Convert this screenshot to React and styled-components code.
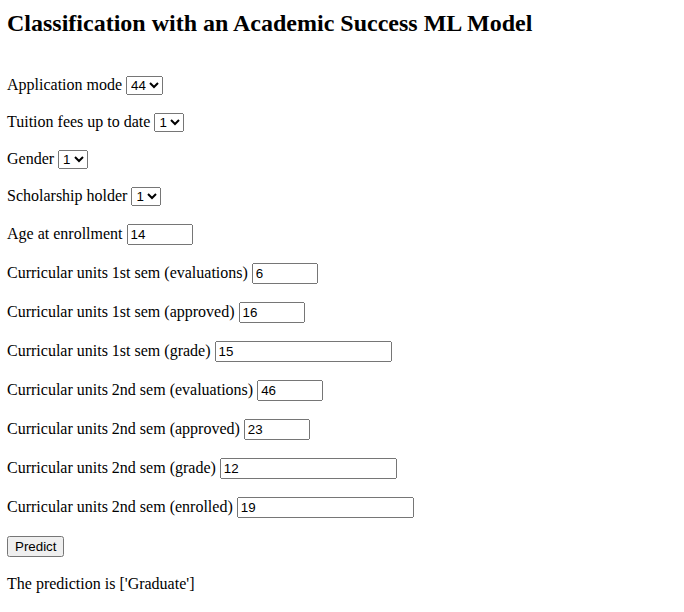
import React from "react";
import styled, { createGlobalStyle } from "styled-components";

const Global = createGlobalStyle`
  html, body { margin: 0; padding: 0; background: #ffffff; }
  body {
    font-family: "Liberation Serif", "Times New Roman", serif;
    font-size: 16px;
    color: #000000;
  }
`;

const Page = styled.div`
  padding: 10px 7px 8px;
  display: flex;
  flex-direction: column;
`;

const Title = styled.h2`
  margin: 0 0 39px;
  font-size: 24px;
  font-weight: bold;
  line-height: normal;
`;

const Form = styled.form`
  display: flex;
  flex-direction: column;
  gap: 18px;
`;

const Row = styled.div`
  display: block;
  line-height: normal;
`;

const Select = styled.select`
  font-family: "Liberation Sans", Arial, sans-serif;
  font-size: 13.333px;
`;

const Input = styled.input`
  font-family: "Liberation Sans", Arial, sans-serif;
  font-size: 13.333px;
  width: ${(p) => (p.$wide ? "169px" : "58px")};
`;

const Button = styled.button`
  font-family: "Liberation Sans", Arial, sans-serif;
  font-size: 13.333px;
`;

const Result = styled.p`
  margin: 18px 0 0;
`;

const selects = [
  ["Application mode", "44"],
  ["Tuition fees up to date", "1"],
  ["Gender", "1"],
  ["Scholarship holder", "1"],
];

const inputs = [
  ["Age at enrollment", "14", false],
  ["Curricular units 1st sem (evaluations)", "6", false],
  ["Curricular units 1st sem (approved)", "16", false],
  ["Curricular units 1st sem (grade)", "15", true],
  ["Curricular units 2nd sem (evaluations)", "46", false],
  ["Curricular units 2nd sem (approved)", "23", false],
  ["Curricular units 2nd sem (grade)", "12", true],
  ["Curricular units 2nd sem (enrolled)", "19", true],
];

export default function App() {
  return (
    <>
      <Global />
      <Page>
        <Title>Classification with an Academic Success ML Model</Title>
        <Form onSubmit={(e) => e.preventDefault()}>
          {selects.map(([label, val]) => (
            <Row key={label}>
              {label}{" "}
              <Select defaultValue={val}>
                <option value={val}>{val}</option>
              </Select>
            </Row>
          ))}
          {inputs.map(([label, val, wide]) => (
            <Row key={label}>
              {label}{" "}
              <Input type="text" defaultValue={val} $wide={wide} />
            </Row>
          ))}
          <Row>
            <Button type="submit">Predict</Button>
          </Row>
        </Form>
        <Result>The prediction is ['Graduate']</Result>
      </Page>
    </>
  );
}
